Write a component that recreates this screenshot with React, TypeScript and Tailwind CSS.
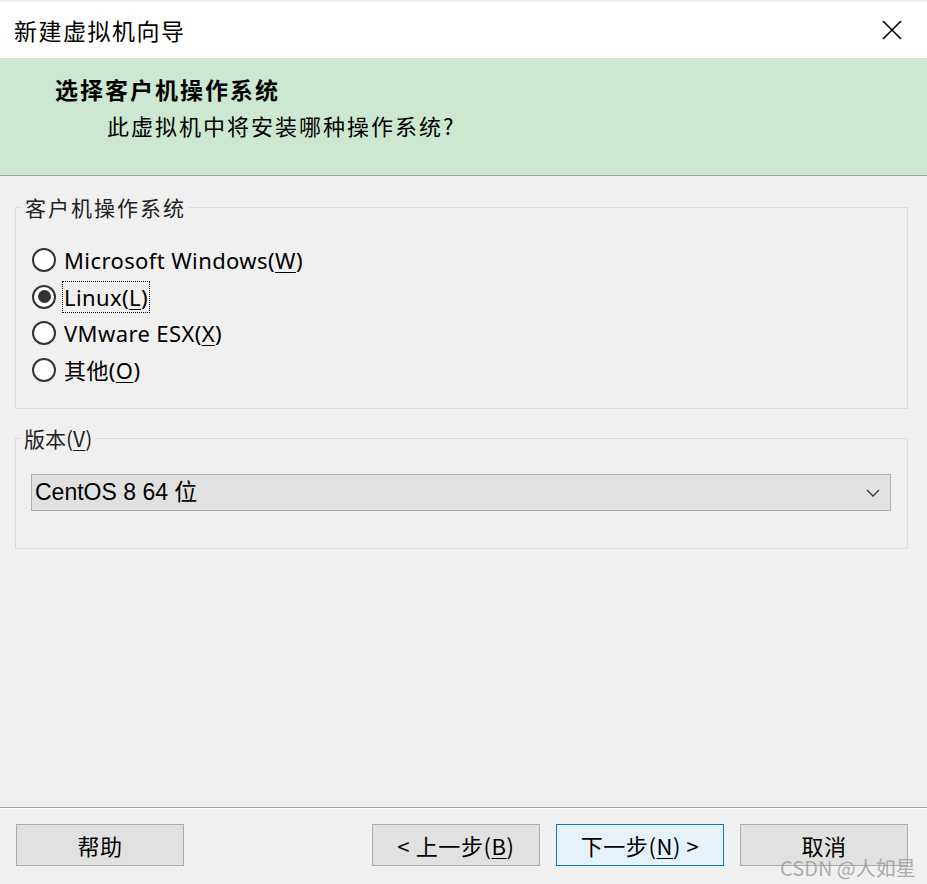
import type { ReactNode } from 'react';

const cjk = 'font-["Noto_Sans_CJK_SC",sans-serif]';
const ui = 'font-["Noto_Sans","Noto_Sans_CJK_SC",sans-serif]';

/** 带下划线的助记符字母 */
function Key({ children }: { children: ReactNode }) {
  return <span className="underline decoration-1 underline-offset-[3px]">{children}</span>;
}

function Radio({ checked, focused, children }: { checked?: boolean; focused?: boolean; children: ReactNode }) {
  return (
    <div className="flex h-[36.5px] items-center gap-[7px]">
      <span className="flex size-[24px] shrink-0 items-center justify-center rounded-full border-2 border-[#333] bg-white">
        {checked && <span className="size-[13px] rounded-full bg-[#333]" />}
      </span>
      <span
        className={`${ui} px-px text-[22px] leading-[30px] tracking-[0.4px] text-black ${
          focused ? 'outline outline-1 outline-dotted outline-black' : ''
        }`}
      >
        {children}
      </span>
    </div>
  );
}

function Button({ primary, children }: { primary?: boolean; children: ReactNode }) {
  return (
    <button
      className={`${cjk} flex h-[42px] w-[168px] items-center justify-center border text-[22px] tracking-[0.6px] text-black ${
        primary ? 'border-[#0078d7] bg-[#e5f1fb]' : 'border-[#adadad] bg-[#e1e1e1]'
      }`}
    >
      {children}
    </button>
  );
}

export default function App() {
  return (
    <div className="flex h-[884px] w-[927px] flex-col overflow-hidden bg-[#f0f0f0]">
      {/* 标题栏 */}
      <div className="mt-[2px] flex h-[56px] items-center justify-between bg-white pl-[14px] pr-[25px]">
        <span className={`${cjk} text-[23px] tracking-[1.5px] text-black`}>新建虚拟机向导</span>
        <svg width="20" height="20" viewBox="0 0 20 20" className="text-black">
          <path d="M1 1 L19 19 M19 1 L1 19" stroke="currentColor" strokeWidth="1.6" fill="none" />
        </svg>
      </div>

      {/* 绿色向导头 */}
      <div className="h-[118px] border-b border-[#a0a0a0] bg-[#cce8d0] pt-[16px]">
        <div className={`${cjk} pl-[55px] text-[23px] font-bold leading-[30px] tracking-[2px] text-black`}>
          选择客户机操作系统
        </div>
        <div className={`${cjk} mt-[6px] pl-[107px] text-[22px] leading-[30px] tracking-[2px] text-black`}>
          此虚拟机中将安装哪种操作系统?
        </div>
      </div>

      <div className="flex flex-col gap-[15px] pl-[15px] pr-[19px] pt-[17px]">
        <fieldset className="h-[216px] border border-[#dcdcdc] pl-[16px]">
          <legend className={`${cjk} ml-[-10px] px-[3px] text-[21px] leading-[28px] tracking-[2px] text-[#222]`}>
            客户机操作系统
          </legend>
          <div className="mt-[21px] flex flex-col">
            <Radio>
              Microsoft Windows(<Key>W</Key>)
            </Radio>
            <Radio checked focused>
              Linux(<Key>L</Key>)
            </Radio>
            <Radio>
              VMware ESX(<Key>X</Key>)
            </Radio>
            <Radio>
              其他(<Key>O</Key>)
            </Radio>
          </div>
        </fieldset>

        <fieldset className="h-[125px] border border-[#dcdcdc] pl-[15px] pr-[16px]">
          <legend className={`${cjk} ml-[-10px] px-[3px] text-[21px] leading-[28px] text-[#222]`}>
            版本(<Key>V</Key>)
          </legend>
          <div className="mt-[22px] flex h-[37px] items-center justify-between border border-[#adadad] bg-[#e1e1e1] pl-[3px] pr-[10px]">
            <span className={`font-["Liberation_Sans","Noto_Sans_CJK_SC",sans-serif] text-[23px] text-black`}>
              CentOS 8 64 位
            </span>
            <svg width="14" height="8" viewBox="0 0 14 8">
              <path d="M1 1 L7 7 L13 1" stroke="#333" strokeWidth="1.3" fill="none" />
            </svg>
          </div>
        </fieldset>
      </div>

      <div className="flex-1" />

      {/* 底部分隔线与按钮 */}
      <div className="border-t border-[#a0a0a0]">
        <div className="h-px bg-white" />
      </div>
      <div className="flex items-center pb-[18px] pl-[16px] pr-[19px] pt-[15px]">
        <Button>帮助</Button>
        <div className="flex-1" />
        <div className="flex gap-[16px]">
          <Button>
            &lt; 上一步(<Key>B</Key>)
          </Button>
          <Button primary>
            下一步(<Key>N</Key>) &gt;
          </Button>
          <div className="relative">
            <Button>取消</Button>
            <span
              className={`${cjk} absolute left-[40px] top-[29px] whitespace-nowrap text-[20px] text-[#9a9a9a]/80`}
            >
              CSDN @人如星
            </span>
          </div>
        </div>
      </div>
    </div>
  );
}
